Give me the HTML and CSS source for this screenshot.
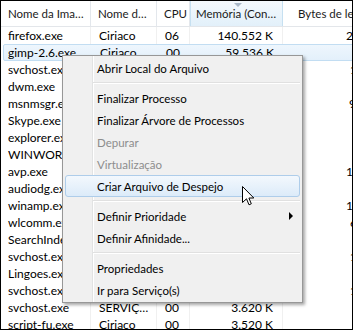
FILE: index.html
```html
<!DOCTYPE html>
<html>
<head>
<meta charset="utf-8">
<link rel="stylesheet" href="styles.css">
</head>
<body>
<div class="frame">
  <div class="head">
    <div class="hc c1">Nome da Ima…</div>
    <div class="hc c2">Nome d…</div>
    <div class="hc r">CPU</div>
    <div class="hc sorted">Memória (Con…</div>
    <div class="hc c5">Bytes de le</div>
  </div>
  <div class="row"><div class="c c1">firefox.exe</div><div class="c c2">Ciriaco</div><div class="c num cpu">06</div><div class="c num mem">140.552 K</div><div class="c c5 near">24.512</div></div>
  <div class="row sel"><div class="c c1">gimp-2.6.exe</div><div class="c c2">Ciriaco</div><div class="c num cpu">00</div><div class="c num mem">59.536 K</div><div class="c c5"></div></div>
  <div class="row"><div class="c c1">svchost.exe</div><div class="c c2">SISTEMA</div><div class="c num cpu">00</div><div class="c num mem">52.104 K</div><div class="c c5 far">1.288</div></div>
  <div class="row"><div class="c c1">dwm.exe</div><div class="c c2">Ciriaco</div><div class="c num cpu">00</div><div class="c num mem">44.820 K</div><div class="c c5"></div></div>
  <div class="row"><div class="c c1">msnmsgr.exe</div><div class="c c2">Ciriaco</div><div class="c num cpu">00</div><div class="c num mem">33.412 K</div><div class="c c5 mid">9.118</div></div>
  <div class="row"><div class="c c1">Skype.exe</div><div class="c c2">Ciriaco</div><div class="c num cpu">00</div><div class="c num mem">29.760 K</div><div class="c c5"></div></div>
  <div class="row"><div class="c c1">explorer.exe</div><div class="c c2">Ciriaco</div><div class="c num cpu">00</div><div class="c num mem">27.344 K</div><div class="c c5"></div></div>
  <div class="row"><div class="c c1">WINWORD.EXE</div><div class="c c2">Ciriaco</div><div class="c num cpu">00</div><div class="c num mem">25.108 K</div><div class="c c5"></div></div>
  <div class="row"><div class="c c1">avp.exe</div><div class="c c2">SISTEMA</div><div class="c num cpu">00</div><div class="c num mem">21.936 K</div><div class="c c5 near">19.402</div></div>
  <div class="row"><div class="c c1">audiodg.exe</div><div class="c c2">SERVIÇ…</div><div class="c num cpu">00</div><div class="c num mem">14.228 K</div><div class="c c5"></div></div>
  <div class="row"><div class="c c1">winamp.exe</div><div class="c c2">Ciriaco</div><div class="c num cpu">00</div><div class="c num mem">12.880 K</div><div class="c c5 near">15.220</div></div>
  <div class="row"><div class="c c1">wlcomm.exe</div><div class="c c2">Ciriaco</div><div class="c num cpu">00</div><div class="c num mem">10.512 K</div><div class="c c5 far">6.448</div></div>
  <div class="row"><div class="c c1">SearchIndexer.exe</div><div class="c c2">SISTEMA</div><div class="c num cpu">00</div><div class="c num mem">9.304 K</div><div class="c c5"></div></div>
  <div class="row"><div class="c c1">svchost.exe</div><div class="c c2">SISTEMA</div><div class="c num cpu">00</div><div class="c num mem">8.716 K</div><div class="c c5 far">1.104</div></div>
  <div class="row"><div class="c c1">Lingoes.exe</div><div class="c c2">Ciriaco</div><div class="c num cpu">00</div><div class="c num mem">6.992 K</div><div class="c c5"></div></div>
  <div class="row"><div class="c c1">svchost.exe</div><div class="c c2">SERVIÇ…</div><div class="c num cpu">00</div><div class="c num mem">4.448 K</div><div class="c c5 far">1.012</div></div>
  <div class="row"><div class="c c1">svchost.exe</div><div class="c c2">SERVIÇ…</div><div class="c num cpu">00</div><div class="c num mem">3.620 K</div><div class="c c5"></div></div>
  <div class="row"><div class="c c1">script-fu.exe</div><div class="c c2">Ciriaco</div><div class="c num cpu">00</div><div class="c num mem">3.520 K</div><div class="c c5"></div></div>

  <div class="menu">
    <div class="mi">Abrir Local do Arquivo</div>
    <div class="sep"></div>
    <div class="mi">Finalizar Processo</div>
    <div class="mi">Finalizar Árvore de Processos</div>
    <div class="mi dis">Depurar</div>
    <div class="mi dis">Virtualização</div>
    <div class="mi hot">Criar Arquivo de Despejo</div>
    <div class="sep"></div>
    <div class="mi">Definir Prioridade<span class="arrow"></span></div>
    <div class="mi">Definir Afinidade...</div>
    <div class="sep"></div>
    <div class="mi">Propriedades</div>
    <div class="mi">Ir para Serviço(s)</div>
  </div>

  <svg class="cursor" width="13" height="20" viewBox="0 0 13 20">
    <path d="M0.5 0.5 V16.5 L4.5 12.8 L7 18.8 L9.3 17.8 L6.9 12 H11.8 Z" fill="#fff" stroke="#000" stroke-width="1" stroke-linejoin="miter"/>
  </svg>
</div>
</body>
</html>
```

FILE: styles.css
```css
* { box-sizing: border-box; }
body {
  margin: 0;
  font-family: "Segoe UI", Lato, "Open Sans", sans-serif;
  font-size: 12px;
  color: #000;
}
.frame {
  position: relative;
  width: 353px;
  height: 330px;
  border: 1px solid #000;
  overflow: hidden;
  background: #fff;
}
.head, .row {
  display: grid;
  grid-template-columns: 90px 66px 33px 93px 220px;
  width: 502px;
}
.head {
  height: 26px;
  border-bottom: 1px solid #e3e6ea;
  font-size: 11.5px;
}
.hc {
  line-height: 25px;
  padding: 0 6px 0 7px;
  border-right: 1px solid #e3e7ec;
  white-space: nowrap;
  overflow: hidden;
  color: #1a1a1a;
}
.hc.r {
  text-align: right;
  padding-right: 6px;
}
.hc.sorted {
  position: relative;
  padding-left: 5px;
  background: linear-gradient(#f4f9fd, #e2f0fa);
  border-left: 1px solid #c6e0f1;
  border-right: 1px solid #c6e0f1;
}
.hc.sorted::before {
  content: "";
  position: absolute;
  top: 2px;
  left: 43px;
  border-left: 4px solid transparent;
  border-right: 4px solid transparent;
  border-top: 4px solid #a9b8c8;
}
.hc.c5 {
  padding-left: 15px;
  border-right: none;
}
.row {
  height: 17px;
}
.c {
  line-height: 17px;
  padding: 0 6px 0 7px;
  white-space: nowrap;
  overflow: hidden;
  border-right: 1px solid #f0f0f0;
}
.c.c2 { padding-left: 8px; }
.c.num { text-align: right; }
.c.cpu { padding-right: 10px; }
.c.mem { padding-right: 9px; }
.c.c5 { border-right: none; padding-left: 63px; }
.c.c5.mid { padding-left: 66px; }
.c.c5.far { padding-left: 67px; }
.row.sel {
  margin-left: 2px;
  width: 500px;
  grid-template-columns: 88px 66px 33px 93px 220px;
  border: 1px solid #c2ddf2;
  border-radius: 2px;
  background: linear-gradient(#eef6fd, #e3f0fb);
}
.row.sel .c {
  line-height: 15px;
  border-right-color: transparent;
}
.row.sel .c.c1 { padding-left: 4px; }
.menu {
  position: absolute;
  left: 61px;
  top: 54px;
  width: 241px;
  padding: 1px 2px;
  border: 1px solid #979797;
  font-size: 11.5px;
  background: linear-gradient(to right, #f0f0f0 29px, #e2e3e3 29px, #e2e3e3 30px, #fff 30px, #fff 31px, #f0f0f0 31px);
  box-shadow: 2px 2px 3px rgba(0, 0, 0, 0.35);
}
.mi {
  height: 22px;
  display: flex;
  align-items: center;
  padding-left: 31px;
  border: 1px solid transparent;
  border-radius: 3px;
  white-space: nowrap;
  color: #000;
}
.mi.dis { color: #8d8d8d; }
.mi.hot {
  border-color: #aecdea;
  background: linear-gradient(#f3f8fd, #dcebf9);
}
.sep {
  height: 2px;
  margin: 3px 0 3px 28px;
  background: #e0e0e0;
  border-bottom: 1px solid #fff;
}
.arrow {
  margin-left: auto;
  margin-right: 6px;
  width: 0;
  height: 0;
  border-left: 4px solid #000;
  border-top: 4px solid transparent;
  border-bottom: 4px solid transparent;
}
.cursor {
  position: absolute;
  left: 241px;
  top: 185px;
}
```
